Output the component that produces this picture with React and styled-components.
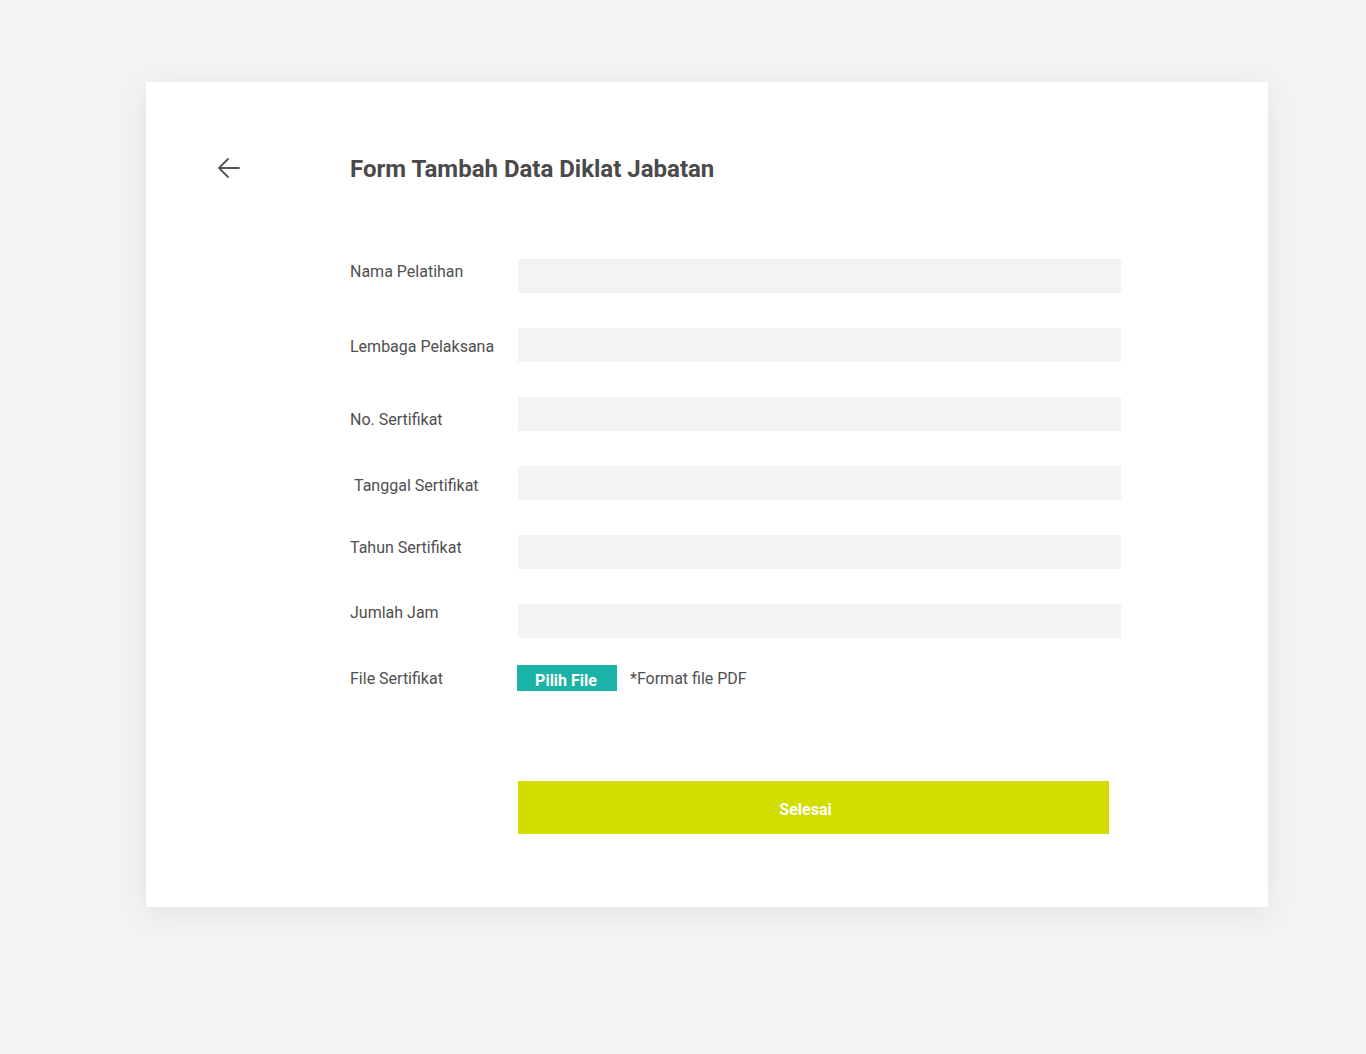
import React from 'react';
import styled, {createGlobalStyle} from 'styled-components';

const FIELDS = [
  {label: 'Nama Pelatihan', offset: 4},
  {label: 'Lembaga Pelaksana', offset: 10},
  {label: 'No. Sertifikat', offset: 14},
  {label: 'Tanggal Sertifikat', offset: 11, indent: 4},
  {label: 'Tahun Sertifikat', offset: 4},
  {label: 'Jumlah Jam', offset: 0},
];

const GlobalStyle = createGlobalStyle`
  html, body {
    margin: 0;
    padding: 0;
    background: #f3f3f3;
    font-family: Roboto, "Liberation Sans", Arial, sans-serif;
  }
`;

function BackArrow() {
  return (
    <svg width="24" height="22" viewBox="0 0 24 22" fill="none">
      <path
        d="M22 11H2M11 2L2 11L11 20"
        stroke="#555"
        strokeWidth="1.8"
        strokeLinecap="round"
        strokeLinejoin="round"
      />
    </svg>
  );
}

export default function App() {
  return (
    <Page>
      <GlobalStyle />
      <Card>
        <Header>
          <BackButton aria-label="Kembali">
            <BackArrow />
          </BackButton>
          <Title>Form Tambah Data Diklat Jabatan</Title>
        </Header>

        <Form>
          {FIELDS.map((f, idx) => (
            <Row key={idx}>
              <Label $offset={f.offset} $indent={f.indent}>
                {f.label}
              </Label>
              <Input type="text" />
            </Row>
          ))}

          <FileRow>
            <Label $offset={1}>File Sertifikat</Label>
            <FileButton type="button">Pilih File</FileButton>
            <Hint>*Format file PDF</Hint>
          </FileRow>

          <SubmitRow>
            <SubmitButton type="button">Selesai</SubmitButton>
          </SubmitRow>
        </Form>
      </Card>
    </Page>
  );
}

const Page = styled.div`
  min-height: 1054px;
  padding: 82px 0 0 146px;
  box-sizing: border-box;
`;

const Card = styled.div`
  width: 1122px;
  height: 825px;
  box-sizing: border-box;
  background: #fff;
  box-shadow: 0 6px 28px rgba(0, 0, 0, 0.07);
  padding: 75px 0 0 71px;
`;

const Header = styled.div`
  display: flex;
  align-items: flex-start;
`;

const BackButton = styled.button`
  border: none;
  background: none;
  padding: 0;
  width: 24px;
  height: 22px;
  cursor: pointer;
  display: flex;
`;

const Title = styled.h1`
  margin: 0 0 0 109px;
  font-size: 24px;
  font-weight: 700;
  color: #4a4a4a;
  line-height: 24px;
`;

const Form = styled.div`
  margin: 78px 0 0 133px;
  display: flex;
  flex-direction: column;
  gap: 35px;
`;

const Row = styled.div`
  display: flex;
  align-items: flex-start;
  height: 34px;
`;

const Label = styled.label`
  width: ${(p) => 168 - (p.$indent || 0)}px;
  flex-shrink: 0;
  margin-top: ${(p) => p.$offset}px;
  padding-left: ${(p) => p.$indent || 0}px;
  font-size: 16px;
  line-height: 18px;
  color: #4f4f4f;
`;

const Input = styled.input`
  width: 603px;
  height: 34px;
  box-sizing: border-box;
  border: none;
  background: #f3f3f3;
  outline: none;
  padding: 0 12px;
  font: inherit;
`;

const FileRow = styled.div`
  display: flex;
  align-items: flex-start;
  margin-top: -4px;
`;

const FileButton = styled.button`
  margin-left: -1px;
  margin-top: -4px;
  width: 100px;
  height: 26px;
  border: none;
  background: #1bb3a7;
  color: #fff;
  font-family: Roboto, "Liberation Sans", Arial, sans-serif;
  font-weight: 700;
  font-size: 16px;
  padding: 4px 2px 0 0;
  cursor: pointer;
`;

const Hint = styled.span`
  margin: 1px 0 0 13px;
  font-size: 16px;
  line-height: 18px;
  color: #4f4f4f;
`;

const SubmitRow = styled.div`
  padding-left: 168px;
  margin-top: 55px;
`;

const SubmitButton = styled.button`
  width: 591px;
  height: 53px;
  border: none;
  background: #d2dd00;
  color: #fff;
  font-family: Roboto, "Liberation Sans", Arial, sans-serif;
  font-weight: 700;
  font-size: 16px;
  padding: 3px 16px 0 0;
  cursor: pointer;
`;
